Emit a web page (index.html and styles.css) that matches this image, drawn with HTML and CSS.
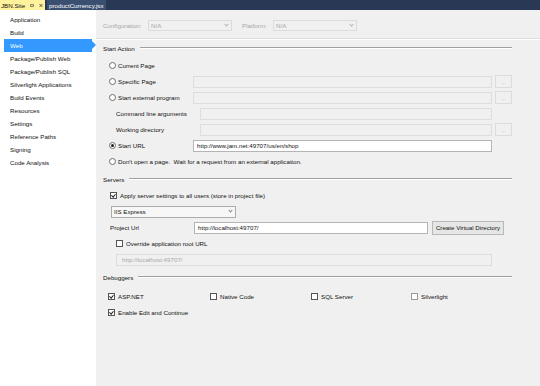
FILE: index.html
```html
<!DOCTYPE html>
<html lang="en-US">
    <head>
        <meta charset="utf-8">
        <title>JBN.Site - Web</title>
        <meta name="viewport" content="width=device-width,initial-scale=1">
        <link rel="stylesheet" href="styles.css">
    </head>
    <body>
        <div class="tabbar">
            <div class="tab pinned">
                <span>JBN.Site</span>
                <svg class="pin" width="5" height="5" viewBox="0 0 5 5"><rect x="1" y="1" width="3" height="3" fill="none" stroke="#555" stroke-width="0.8"/><path d="M0 2.5H1M4 2.5H5" stroke="#555" stroke-width="0.8"/></svg>
                <svg class="close" width="5" height="5" viewBox="0 0 5 5"><path d="M0.5 0.5L4.5 4.5M4.5 0.5L0.5 4.5" stroke="#333" stroke-width="0.9"/></svg>
            </div>
            <div class="tab file">productCurrency.jsx</div>
        </div>

        <div class="layout">
            <nav class="nav">
                <div class="nav-item">Application</div>
                <div class="nav-item">Build</div>
                <div class="nav-item current">Web</div>
                <div class="nav-item">Package/Publish Web</div>
                <div class="nav-item">Package/Publish SQL</div>
                <div class="nav-item">Silverlight Applications</div>
                <div class="nav-item">Build Events</div>
                <div class="nav-item">Resources</div>
                <div class="nav-item">Settings</div>
                <div class="nav-item">Reference Paths</div>
                <div class="nav-item">Signing</div>
                <div class="nav-item">Code Analysis</div>
            </nav>

            <main class="page">
                <div class="config-row">
                    <span class="config-label">Configuration:</span>
                    <div class="select disabled"><span>N/A</span><span class="chevron"></span></div>
                    <span class="config-label platform">Platform:</span>
                    <div class="select disabled"><span>N/A</span><span class="chevron"></span></div>
                </div>
                <div class="separator"></div>

                <section class="section first">
                    <div class="section-head">Start Action</div>
                    <div class="section-body">
                        <div class="row">
                            <label class="row-label"><span class="radio"></span>Current Page</label>
                        </div>
                        <div class="row">
                            <label class="row-label"><span class="radio"></span>Specific Page</label>
                            <div class="field"></div>
                            <div class="browse">...</div>
                        </div>
                        <div class="row">
                            <label class="row-label"><span class="radio"></span>Start external program</label>
                            <div class="field"></div>
                            <div class="browse">...</div>
                        </div>
                        <div class="row">
                            <label class="row-label indent">Command line arguments</label>
                            <div class="field no-browse"></div>
                        </div>
                        <div class="row">
                            <label class="row-label indent">Working directory</label>
                            <div class="field"></div>
                            <div class="browse">...</div>
                        </div>
                        <div class="row">
                            <label class="row-label"><span class="radio checked"></span>Start URL</label>
                            <div class="field enabled no-browse">http://www.jam.net:49707/us/en/shop</div>
                        </div>
                        <div class="row">
                            <label class="row-label wide"><span class="radio"></span>Don't open a page.&nbsp; Wait for a request from an external application.</label>
                        </div>
                    </div>
                </section>

                <section class="section">
                    <div class="section-head">Servers</div>
                    <div class="section-body servers">
                        <div class="row">
                            <label class="row-label wide"><span class="check checked"></span>Apply server settings to all users (store in project file)</label>
                        </div>
                        <div class="row">
                            <div class="select server"><span>IIS Express</span><span class="chevron"></span></div>
                        </div>
                        <div class="row">
                            <label class="row-label">Project Url</label>
                            <div class="field enabled">http://localhost:49707/</div>
                            <div class="button">Create Virtual Directory</div>
                        </div>
                        <div class="row">
                            <label class="row-label wide indent"><span class="check"></span>Override application root URL</label>
                        </div>
                        <div class="row indent">
                            <div class="field muted no-browse">http://localhost:49707/</div>
                        </div>
                    </div>
                </section>

                <section class="section">
                    <div class="section-head">Debuggers</div>
                    <div class="section-body debuggers">
                        <div class="debugger-grid">
                            <label class="row-label"><span class="check checked"></span>ASP.NET</label>
                            <label class="row-label"><span class="check"></span>Native Code</label>
                            <label class="row-label"><span class="check"></span>SQL Server</label>
                            <label class="row-label"><span class="check faint"></span>Silverlight</label>
                        </div>
                        <div class="row">
                            <label class="row-label wide"><span class="check checked"></span>Enable Edit and Continue</label>
                        </div>
                    </div>
                </section>
            </main>
        </div>
    </body>
</html>
```

FILE: styles.css
```css
html, body {
    margin: 0;
    width: 540px;
    height: 386px;
    overflow: hidden;
}
body {
    font-family: "Liberation Sans", Arial, sans-serif;
    font-size: 6.2px;
    color: #111;
    background-color: #f0f0f0;
}

/* document tabs */
.tabbar {
    height: 10px;
    display: flex;
    background-color: #293955;
}
.tab {
    display: flex;
    align-items: center;
    white-space: nowrap;
}
.tab.pinned {
    width: 42px;
    padding: 0 2px 0 1px;
    gap: 5px;
    background-color: #fff29d;
}
.tab.file {
    margin-left: 2px;
    padding: 0 2px;
    color: #fff;
    background-color: #3b5070;
}

.layout {
    display: flex;
    height: 376px;
}

/* left navigation */
.nav {
    width: 96px;
    padding-top: 3px;
    background-color: #fff;
}
.nav-item {
    height: 13px;
    line-height: 13px;
    padding-left: 10px;
    white-space: nowrap;
}
.nav-item.current {
    position: relative;
    margin: 0 4px;
    padding-left: 6px;
    color: #fff;
    background-color: #3399ff;
}
.nav-item.current::after {
    content: "";
    position: absolute;
    top: 2px;
    right: -4px;
    border-top: 4.5px solid transparent;
    border-bottom: 4.5px solid transparent;
    border-left: 4px solid #3399ff;
}

/* property page */
.page {
    flex: 1;
    padding: 0 28px 0 7px;
}

.config-row {
    height: 12px;
    margin-top: 9px;
    display: flex;
    align-items: center;
}
.config-label {
    width: 45px;
    color: #a8a8a8;
}
.config-label.platform {
    width: 31px;
    margin-left: 10px;
}

.select {
    width: 84px;
    height: 11px;
    box-sizing: border-box;
    padding: 0 3px 0 2px;
    display: flex;
    align-items: center;
    justify-content: space-between;
    border: 1px solid #dcdcdc;
}
.select.disabled {
    color: #a8a8a8;
}
.select.server {
    width: 125px;
    height: 12px;
    margin-left: 1px;
    border-color: #acacac;
    background-color: #f7f7f7;
}
.chevron {
    width: 2px;
    height: 2px;
    margin-bottom: 2px;
    border-right: 1px solid #888;
    border-bottom: 1px solid #888;
    transform: rotate(45deg);
}
.select.disabled .chevron {
    border-color: #b5b5b5;
}

.separator {
    margin: 7px -28px 0 -7px;
    border-top: 1px solid #dcdcdc;
    border-bottom: 1px solid #fff;
}

.section {
    margin-top: 6px;
}
.section.first {
    margin-top: 3px;
}
.section-head {
    height: 10px;
    display: flex;
    align-items: center;
    gap: 5px;
}
.section-head::after {
    content: "";
    flex: 1;
    border-top: 1px solid #a0a0a0;
    border-bottom: 1px solid #fff;
}

.section-body {
    padding: 6px 0 0 6px;
    display: flex;
    flex-direction: column;
    gap: 3px;
}
.section-body.servers {
    padding-top: 5px;
    padding-left: 7px;
}
.section-body.debuggers {
    padding-top: 8px;
    padding-left: 5px;
}

.row {
    height: 13px;
    display: flex;
    align-items: center;
}
.row.indent {
    padding-left: 6px;
}
.row-label {
    width: 84px;
    flex-shrink: 0;
    display: flex;
    align-items: center;
    gap: 2px;
    white-space: nowrap;
}
.row-label.wide {
    width: auto;
}
.row-label.indent {
    padding-left: 7px;
}
.servers .row-label.indent {
    padding-left: 6px;
}

.field {
    flex: 1;
    height: 12px;
    box-sizing: border-box;
    padding-left: 3px;
    display: flex;
    align-items: center;
    border: 1px solid #dddddd;
}
.field.enabled {
    border-color: #b4b4b4;
    background-color: #fff;
}
.field.muted {
    padding-left: 5px;
    color: #a8a8a8;
}
.field.no-browse {
    margin-right: 20px;
}

.browse {
    width: 17px;
    height: 13px;
    margin-left: 3px;
    box-sizing: border-box;
    display: flex;
    align-items: flex-end;
    justify-content: center;
    padding-bottom: 2px;
    border: 1px solid #dcdcdc;
    color: #b0b0b0;
    font-size: 5px;
}

.button {
    width: 72px;
    height: 14px;
    margin: 0 8px 0 4px;
    box-sizing: border-box;
    display: flex;
    align-items: center;
    justify-content: center;
    border: 1px solid #b8b8b8;
    background-color: #e6e6e6;
    white-space: nowrap;
}

.radio {
    width: 7px;
    height: 7px;
    box-sizing: border-box;
    border: 1px solid #6e6e6e;
    border-radius: 50%;
    background-color: #fff;
    display: flex;
    align-items: center;
    justify-content: center;
}
.radio.checked::before {
    content: "";
    width: 3px;
    height: 3px;
    border-radius: 50%;
    background-color: #1e1e1e;
}

.check {
    width: 7px;
    height: 7px;
    margin-right: 1px;
    box-sizing: border-box;
    border: 1px solid #555;
    background-color: #fff;
    display: flex;
    align-items: center;
    justify-content: center;
}
.check.faint {
    border-color: #9a9a9a;
}
.check.checked::before {
    content: "";
    width: 1.5px;
    height: 3px;
    margin-top: -1px;
    border-right: 1px solid #1e1e1e;
    border-bottom: 1px solid #1e1e1e;
    transform: rotate(40deg);
}

.debugger-grid {
    height: 13px;
    display: grid;
    grid-template-columns: 102px 101px 100px 100px;
    align-items: center;
}
```
